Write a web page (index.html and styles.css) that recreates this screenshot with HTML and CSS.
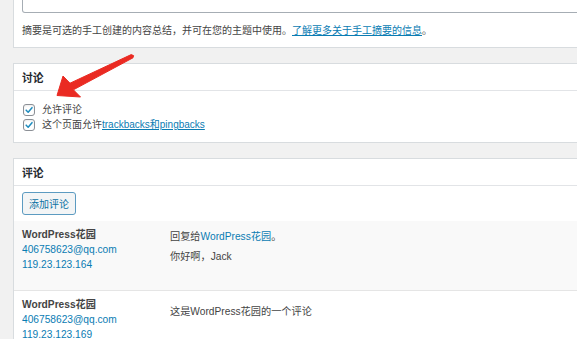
FILE: index.html
```html
<!DOCTYPE html>
<html lang="zh-CN">
<head>
<meta charset="utf-8">
<title>编辑页面</title>
<link rel="stylesheet" href="styles.css">
</head>
<body>
<div class="wrap">
  <div class="panel panel-excerpt">
    <div class="textarea"></div>
    <p class="desc">摘要是可选的手工创建的内容总结，并可在您的主题中使用。<a href="#">了解更多关于手工摘要的信息</a>。</p>
  </div>

  <div class="panel">
    <h2 class="panel-head">讨论</h2>
    <div class="panel-body checks">
      <label class="check"><span class="box"><svg viewBox="0 0 12 12"><path d="M2.6 6.2 L5 8.6 L9.6 3.2" /></svg></span>允许评论</label>
      <label class="check"><span class="box"><svg viewBox="0 0 12 12"><path d="M2.6 6.2 L5 8.6 L9.6 3.2" /></svg></span>这个页面允许<a href="#">trackbacks和pingbacks</a></label>
    </div>
  </div>

  <div class="panel">
    <h2 class="panel-head">评论</h2>
    <div class="panel-body btn-row">
      <button class="button">添加评论</button>
    </div>
    <div class="comment alt">
      <div class="author">
        <strong>WordPress花园</strong>
        <a href="#">406758623@qq.com</a>
        <a href="#">119.23.123.164</a>
      </div>
      <div class="content">
        <div class="reply">回复给<a href="#">WordPress花园</a>。</div>
        <p>你好啊，Jack</p>
      </div>
    </div>
    <div class="comment">
      <div class="author">
        <strong>WordPress花园</strong>
        <a href="#">406758623@qq.com</a>
        <a href="#">119.23.123.169</a>
      </div>
      <div class="content">
        <p>这是WordPress花园的一个评论</p>
      </div>
    </div>
  </div>
</div>
<svg class="arrow" width="577" height="339" viewBox="0 0 577 339">
  <polygon points="57,95.5 63,76 70,83.2 131.2,54.6 133.6,55.6 133,57.8 73.4,89.8 80.5,97" fill="#ea2a22" stroke="#ea2a22" stroke-width="1" stroke-linejoin="round"/>
</svg>
</body>
</html>
```

FILE: styles.css
```css
html, body {
  margin: 0;
  padding: 0;
}
body {
  background: #f1f1f1;
  overflow: hidden;
  width: 577px;
  height: 339px;
  position: relative;
  font-family: "Liberation Sans", "Noto Sans CJK SC", sans-serif;
  font-size: 10px;
  color: #444;
}
a {
  color: #0a7cb3;
}
.wrap {
  padding-left: 13px;
  width: 640px;
}
.panel {
  background: #fff;
  border: 1px solid #d8dcdf;
  margin-bottom: 15px;
}
.panel-excerpt {
  margin-top: -39px;
  border-top: none;
  padding: 0 8px 9px 8px;
}
.textarea {
  height: 51px;
  border: 1px solid #a6adb4;
  border-top: none;
  border-radius: 0 0 3px 3px;
}
.desc {
  margin: 10px 0 0;
  line-height: 15px;
}
.desc a {
  text-decoration: underline;
}
.panel-head {
  margin: 0;
  font-size: 10.8px;
  font-weight: 600;
  color: #23282d;
  line-height: 15px;
  padding: 7px 8px 4px;
  border-bottom: 1px solid #e2e4e7;
}
.panel-body {
  padding: 0 8px;
}
.checks {
  padding-top: 11px;
  padding-bottom: 10px;
  display: flex;
  flex-direction: column;
}
.check {
  display: flex;
  align-items: center;
  line-height: 15px;
  height: 15px;
}
.box {
  width: 10px;
  height: 10px;
  border: 1px solid #8c9096;
  border-radius: 3px;
  background: #fff;
  margin: 0 7px 0 1px;
  display: inline-flex;
  align-items: center;
  justify-content: center;
  box-shadow: inset 0 1px 2px rgba(0,0,0,0.08);
}
.box svg {
  width: 10px;
  height: 10px;
}
.box path {
  fill: none;
  stroke: #1e8cbe;
  stroke-width: 1.8;
  stroke-linecap: round;
  stroke-linejoin: round;
}
.check a {
  text-decoration: underline;
}
.btn-row {
  padding-top: 6px;
  padding-bottom: 6px;
}
.button {
  display: block;
  height: 23px;
  padding: 0 6px;
  font-family: "Liberation Sans", "Noto Sans CJK SC", sans-serif;
  font-size: 10px;
  color: #0a71a3;
  background: #f3f5f6;
  border: 1px solid #5c9bc1;
  border-radius: 3px;
}
.comment {
  display: flex;
  padding: 6px 8px 18px;
  border-bottom: 1px solid #e5e5e5;
  line-height: 15px;
  font-size: 10.2px;
}
.comment.alt {
  background: #f9f9f9;
}
.author {
  width: 148px;
  display: flex;
  flex-direction: column;
}
.author strong {
  font-weight: 600;
  color: #444;
}
.author a {
  text-decoration: none;
}
.content {
  padding-top: 2px;
}
.content p {
  margin: 5px 0 0;
}
.content a {
  text-decoration: none;
}
.arrow {
  position: absolute;
  left: 0;
  top: 0;
  pointer-events: none;
}
```
